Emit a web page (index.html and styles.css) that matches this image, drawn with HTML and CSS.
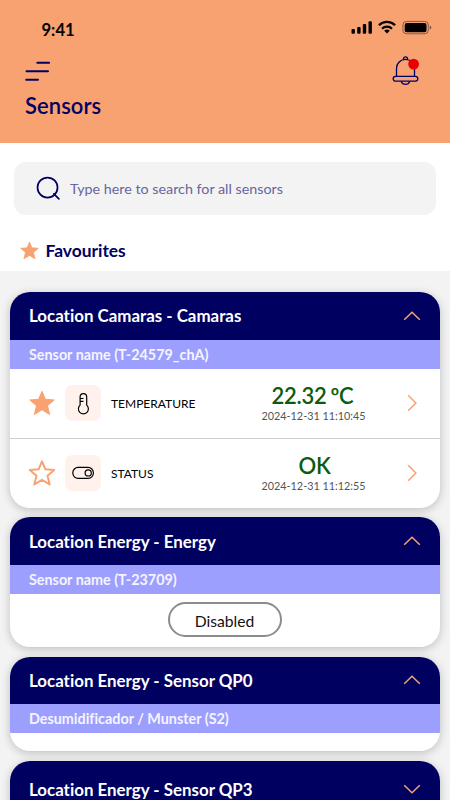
FILE: index.html
```html
<!DOCTYPE html>
<html lang="en">
<head>
<meta charset="utf-8">
<title>Sensors</title>
<link rel="stylesheet" href="styles.css">
</head>
<body>
<svg class="defs" width="0" height="0">
  <symbol id="star" viewBox="0 0 26 26"><path d="M13 1.3 L16.4 9.3 L25.2 10 L18.5 15.8 L20.7 24.5 L13 19.8 L5.3 24.5 L7.5 15.8 L0.8 10 L9.6 9.3 Z"/></symbol>
  <symbol id="up" viewBox="0 0 18 10"><path d="M1.2 8.7 L9 1.2 L16.8 8.7"/></symbol>
  <symbol id="right" viewBox="0 0 10 18"><path d="M1.2 1.2 L8.9 9 L1.2 16.8"/></symbol>
</svg>
<div class="screen">
  <header class="top">
    <div class="status">
      <span class="time">9:41</span>
      <svg class="signals" width="82" height="16" viewBox="0 0 82 16">
        <rect x="0.5" y="9" width="3.4" height="4.8" rx="1"/>
        <rect x="6.2" y="7" width="3.4" height="6.8" rx="1"/>
        <rect x="11.8" y="4" width="3.4" height="9.8" rx="1"/>
        <rect x="17.5" y="1.2" width="3.4" height="12.6" rx="1"/>
        <g fill="none" stroke="#000" stroke-width="2.2">
          <path d="M27.9 5.2 a11.6 11.6 0 0 1 16.2 0"/>
          <path d="M31 8.7 a7.3 7.3 0 0 1 10 0"/>
        </g>
        <path d="M36 13.5 L33.2 10.8 a4.1 4.1 0 0 1 5.6 0 Z"/>
        <rect x="51.9" y="1.4" width="25.4" height="12.4" rx="3.6" fill="none" stroke="#000" stroke-opacity=".45"/>
        <rect x="53.7" y="3" width="21.8" height="9.2" rx="2"/>
        <path d="M78.8 5.5 v4.2 q1.5-.7 1.5-2.1 t-1.5-2.1" opacity=".5"/>
      </svg>
    </div>
    <div class="tools">
      <svg class="menu" width="26" height="20" viewBox="0 0 26 20"><path d="M12.3 1.8 H24.1 M1.5 10.2 H23 M1.2 18.7 H13"/></svg>
      <svg class="bell" width="28" height="31" viewBox="0 0 28 31">
        <path d="M4.5 20.4 V12.4 a9 9 0 0 1 18 0 V20.4 M11.5 3.8 V2.8 a2 2 0 0 1 4 0 V3.8"/>
        <rect x="1.2" y="20.4" width="24.6" height="4.8" rx="2.4"/>
        <path d="M9.2 25.4 q1.3 2.9 4.3 2.9 t4.3-2.9"/>
        <circle class="dot" cx="21.6" cy="8.1" r="5.4"/>
      </svg>
    </div>
    <h1 class="title">Sensors</h1>
  </header>
  <section class="finder">
    <div class="search">
      <svg class="lens" width="26" height="26" viewBox="0 0 26 26"><circle cx="12" cy="12" r="10.4"/><path d="M18.6 18.6 L23.8 23.7"/></svg>
      <span class="hint">Type here to search for all sensors</span>
    </div>
    <div class="favourites"><svg class="star small"><use href="#star"/></svg><span class="fav-text">Favourites</span></div>
  </section>
  <main class="list">
    <article class="card">
      <div class="head"><span class="place">Location Camaras - Camaras</span><svg class="chev"><use href="#up"/></svg></div>
      <div class="sub">Sensor name (T-24579_chA)</div>
      <div class="row">
        <svg class="star"><use href="#star"/></svg>
        <div class="tile"><svg width="36" height="36" viewBox="0 0 36 36"><path d="M15.1 20.1 V11.9 a3.3 3.3 0 0 1 6.6 0 V20.1 a5 5 0 1 1 -6.6 0 Z M15.5 13.5 h3 M15.5 16.3 h3"/></svg></div>
        <span class="kind">TEMPERATURE</span>
        <div class="reading"><b class="value">22.32 ºC</b><span class="date">2024-12-31 11:10:45</span></div>
        <svg class="go"><use href="#right"/></svg>
      </div>
      <div class="row">
        <svg class="star hollow"><use href="#star"/></svg>
        <div class="tile"><svg width="36" height="36" viewBox="0 0 36 36"><rect x="7.8" y="12.4" width="20.6" height="11" rx="5.3"/><circle cx="23.2" cy="17.9" r="3.1"/></svg></div>
        <span class="kind">STATUS</span>
        <div class="reading"><b class="value ok">OK</b><span class="date">2024-12-31 11:12:55</span></div>
        <svg class="go"><use href="#right"/></svg>
      </div>
    </article>
    <article class="card">
      <div class="head"><span class="place">Location Energy - Energy</span><svg class="chev"><use href="#up"/></svg></div>
      <div class="sub">Sensor name (T-23709)</div>
      <div class="action"><button class="disabled">Disabled</button></div>
    </article>
    <article class="card">
      <div class="head"><span class="place">Location Energy - Sensor QP0</span><svg class="chev"><use href="#up"/></svg></div>
      <div class="sub">Desumidificador / Munster (S2)</div>
      <div class="blank"></div>
    </article>
    <article class="card">
      <div class="head last"><span class="place">Location Energy - Sensor QP3</span><svg class="chev down"><use href="#up"/></svg></div>
      <div class="sub"></div>
    </article>
  </main>
</div>
</body>
</html>
```
FILE: styles.css
```css
* { box-sizing: border-box; }
body { margin: 0; font-family: Lato, "Liberation Sans", sans-serif; font-variant-ligatures: none; }
svg { display: block; flex: none; }
.defs { position: absolute; }
.screen { width: 450px; height: 800px; overflow: hidden; background: #f3f3f3; }
.top { height: 143px; background: #f8a272; padding: 20px 17px 0 25px; }
.status { display: flex; justify-content: space-between; height: 36px; }
.time { font-size: 16.6px; font-weight: 700; line-height: 20px; padding-left: 16.5px; }
.tools { display: flex; justify-content: space-between; height: 36px; }
.menu { margin-top: 5px; fill: none; stroke: #000061; stroke-width: 2; stroke-linecap: round; }
.bell { margin: 0 13.5px 0 0; fill: none; stroke: #000061; stroke-width: 1.3; }
.dot { fill: #e90000; stroke: none; }
.title { margin: 0; font-size: 22px; font-weight: 600; line-height: 27px; color: #000061; letter-spacing: .05px; }
.finder { height: 128px; background: #fff; padding: 19px 14px 0; }
.search { display: flex; align-items: center; height: 53px; border-radius: 12px; background: #f3f3f3; padding-left: 21.5px; gap: 8.5px; }
.lens { width: 25px; height: 25px; margin-right: 1px; fill: none; stroke: #000061; stroke-width: 1.8; stroke-linecap: round; }
.hint { font-size: 14.3px; color: #6666a0; }
.favourites { display: flex; align-items: center; height: 24px; margin: 23px 0 0 6px; gap: 6.5px; }
.fav-text { font-size: 17.4px; font-weight: 700; color: #000061; }
.star { width: 26px; height: 26px; fill: #f8a272; stroke: #f8a272; stroke-width: 1; stroke-linejoin: round; }
.small { width: 19px; height: 19px; }
.hollow { fill: none; stroke-width: 2; }
.list { display: flex; flex-direction: column; gap: 9.7px; padding: 21px 9.7px 0; }
.card { flex: none; border-radius: 20px; overflow: hidden; background: #fff; box-shadow: 0 2px 10px rgba(0,0,0,.22); }
.head { height: 47.6px; display: flex; align-items: center; justify-content: space-between; padding: 0 19.5px 0 19.3px; background: #000061; }
.place { font-size: 16.9px; font-weight: 700; color: #fff; }
.last { height: 57px; }
.chev { width: 18px; height: 10px; fill: none; stroke: #f8a272; stroke-width: 1.5; }
.down { transform: rotate(180deg); }
.sub { height: 29px; line-height: 30px; padding-left: 19.3px; font-size: 14.35px; font-weight: 700; color: #f5f5ff; background: #9d9fff; }
.row { display: grid; grid-template-columns: 26px 36px 124px 137px 1fr 10px; column-gap: 10px; align-items: center; height: 69.5px; padding: 0 23.5px 0 19.3px; }
.row + .row { border-top: 1px solid #ccd0cf; }
.tile { width: 36px; height: 36px; border-radius: 7px; background: #fff2ed; fill: none; stroke: #000; stroke-width: 1.2; }
.kind { font-size: 12px; color: #000; }
.reading { display: flex; flex-direction: column; align-items: center; }
.value { font-size: 22px; font-weight: 600; line-height: 24px; color: #0c5b12; padding-top: 1px; margin-left: -2px; word-spacing: -1.5px; letter-spacing: -.2px; }
.ok { padding-left: 2px; margin-left: 0; }
.date { font-size: 10.8px; line-height: 15px; color: #555; }
.go { width: 10px; height: 18px; fill: none; stroke: #f8a272; stroke-width: 1.5; grid-column: 6; }
.action { height: 53px; padding-top: 8.5px; display: flex; justify-content: center; }
.disabled { width: 114px; height: 35px; border: 2px solid #8c8c8c; border-radius: 18px; background: #fff; font-family: inherit; font-size: 15.7px; line-height: 20px; color: #111; padding: 2px 1px 0 0; }
.blank { height: 18px; }
```
